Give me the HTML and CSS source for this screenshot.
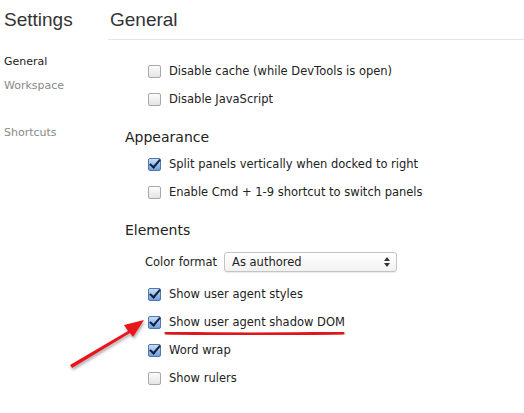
FILE: index.html
```html
<!DOCTYPE html>
<html lang="en">

<head>
    <meta charset="UTF-8">
    <meta name="viewport" content="width=device-width, initial-scale=1.0">
    <title>Settings</title>
    <link rel="stylesheet" href="styles.css">
</head>

<body>
    <div class="settings">
        <div class="sidebar">
            <h1 class="title">Settings</h1>
            <ul class="nav">
                <li class="active">General</li>
                <li>Workspace</li>
                <li class="gap">Shortcuts</li>
            </ul>
        </div>
        <div class="main">
            <h1 class="title header">General</h1>
            <div class="content">
                <label class="row"><span class="box"></span>Disable cache (while DevTools is open)</label>
                <label class="row"><span class="box"></span>Disable JavaScript</label>

                <h2 class="section">Appearance</h2>
                <label class="row"><span class="box checked"></span>Split panels vertically when docked to right</label>
                <label class="row"><span class="box"></span>Enable Cmd + 1-9 shortcut to switch panels</label>

                <h2 class="section">Elements</h2>
                <div class="row select-row">
                    <span class="select-label">Color format</span>
                    <span class="select">As authored<span class="updown"></span></span>
                </div>
                <label class="row"><span class="box checked"></span>Show user agent styles</label>
                <label class="row"><span class="box checked"></span>Show user agent shadow DOM</label>
                <label class="row"><span class="box checked"></span>Word wrap</label>
                <label class="row"><span class="box"></span>Show rulers</label>
            </div>
        </div>
    </div>

    <!-- annotation drawn over the screenshot -->
    <svg class="markup" width="524" height="413" viewBox="0 0 524 413">
        <defs>
            <filter id="shadow" x="-20%" y="-20%" width="140%" height="160%">
                <feDropShadow dx="1" dy="2" stdDeviation="1.5" flood-color="#000" flood-opacity=".35" />
            </filter>
        </defs>
        <path d="M166 333 Q 250 335 343 333" stroke="#e0141a" stroke-width="3" fill="none" stroke-linecap="round" filter="url(#shadow)" />
        <path d="M70 365 L128 331 L124 325 L144 320 L133 337 L130 333 L72 368 Z" fill="#e8161b" filter="url(#shadow)" />
    </svg>
</body>

</html>
```

FILE: styles.css
```css
body {
    margin: 0;
    font-family: "DejaVu Sans", "Liberation Sans", sans-serif;
    font-size: 11.5px;
    color: #222;
    background-color: #fff;
}

.settings {
    display: flex;
}

.sidebar {
    width: 108px;
    flex: none;
}

.title {
    margin: 0;
    height: 40px;
    line-height: 40px;
    font-family: "Liberation Sans", sans-serif;
    font-size: 19px;
    font-weight: normal;
    color: #333;
    box-sizing: border-box;
}

.sidebar .title {
    padding-left: 4px;
}

.nav {
    margin: 10px 0 0;
    padding: 0 0 0 4px;
    list-style: none;
    font-size: 11px;
}

.nav>li {
    height: 24px;
    line-height: 24px;
    color: #888;
}

.nav>li.active {
    color: #222;
}

.nav>li.gap {
    margin-top: 23px;
}

.main {
    flex: 1;
}

.header {
    padding-left: 2px;
    border-bottom: 1px solid #e6e6e6;
}

.content {
    padding-top: 17px;
}

.row {
    display: flex;
    align-items: center;
    height: 28px;
    padding-left: 40px;
}

.section {
    margin: 12px 0 1px;
    padding-left: 17px;
    height: 24px;
    line-height: 24px;
    font-size: 14px;
    font-weight: normal;
    color: #222;
}

.section+.row.select-row {
    margin-top: 6px;
    margin-bottom: 4px;
}

.box {
    position: relative;
    width: 11px;
    height: 11px;
    margin-right: 8px;
    border: 1px solid #a8a8a8;
    border-radius: 2px;
    background: linear-gradient(#fcfcfc, #e4e4e4);
    box-sizing: content-box;
}

.box.checked {
    border-color: #4f77b0;
    background: linear-gradient(#c9ddf6, #6f9fdc);
}

.box.checked::after {
    content: '';
    position: absolute;
    left: 3px;
    top: -2px;
    width: 4px;
    height: 9px;
    border-right: 2.5px solid #10203e;
    border-bottom: 2.5px solid #10203e;
    transform: rotate(40deg);
}

.select-row {
    padding-left: 37px;
}

.select-label {
    margin-right: 7px;
}

.select {
    position: relative;
    display: flex;
    align-items: center;
    width: 164px;
    height: 18px;
    padding-left: 7px;
    border: 1px solid #c4c4c4;
    border-radius: 3px;
    background: linear-gradient(#fff, #f1f1f1);
    box-shadow: 0 1px 1px rgba(0, 0, 0, .08);
}

.updown {
    position: absolute;
    right: 6px;
    top: 4px;
    width: 0;
    height: 0;
    border-left: 3px solid transparent;
    border-right: 3px solid transparent;
    border-bottom: 4px solid #333;
}

.updown::after {
    content: '';
    position: absolute;
    left: -3px;
    top: 6px;
    border-left: 3px solid transparent;
    border-right: 3px solid transparent;
    border-top: 4px solid #333;
}

.markup {
    position: absolute;
    left: 0;
    top: 0;
    pointer-events: none;
}
```
